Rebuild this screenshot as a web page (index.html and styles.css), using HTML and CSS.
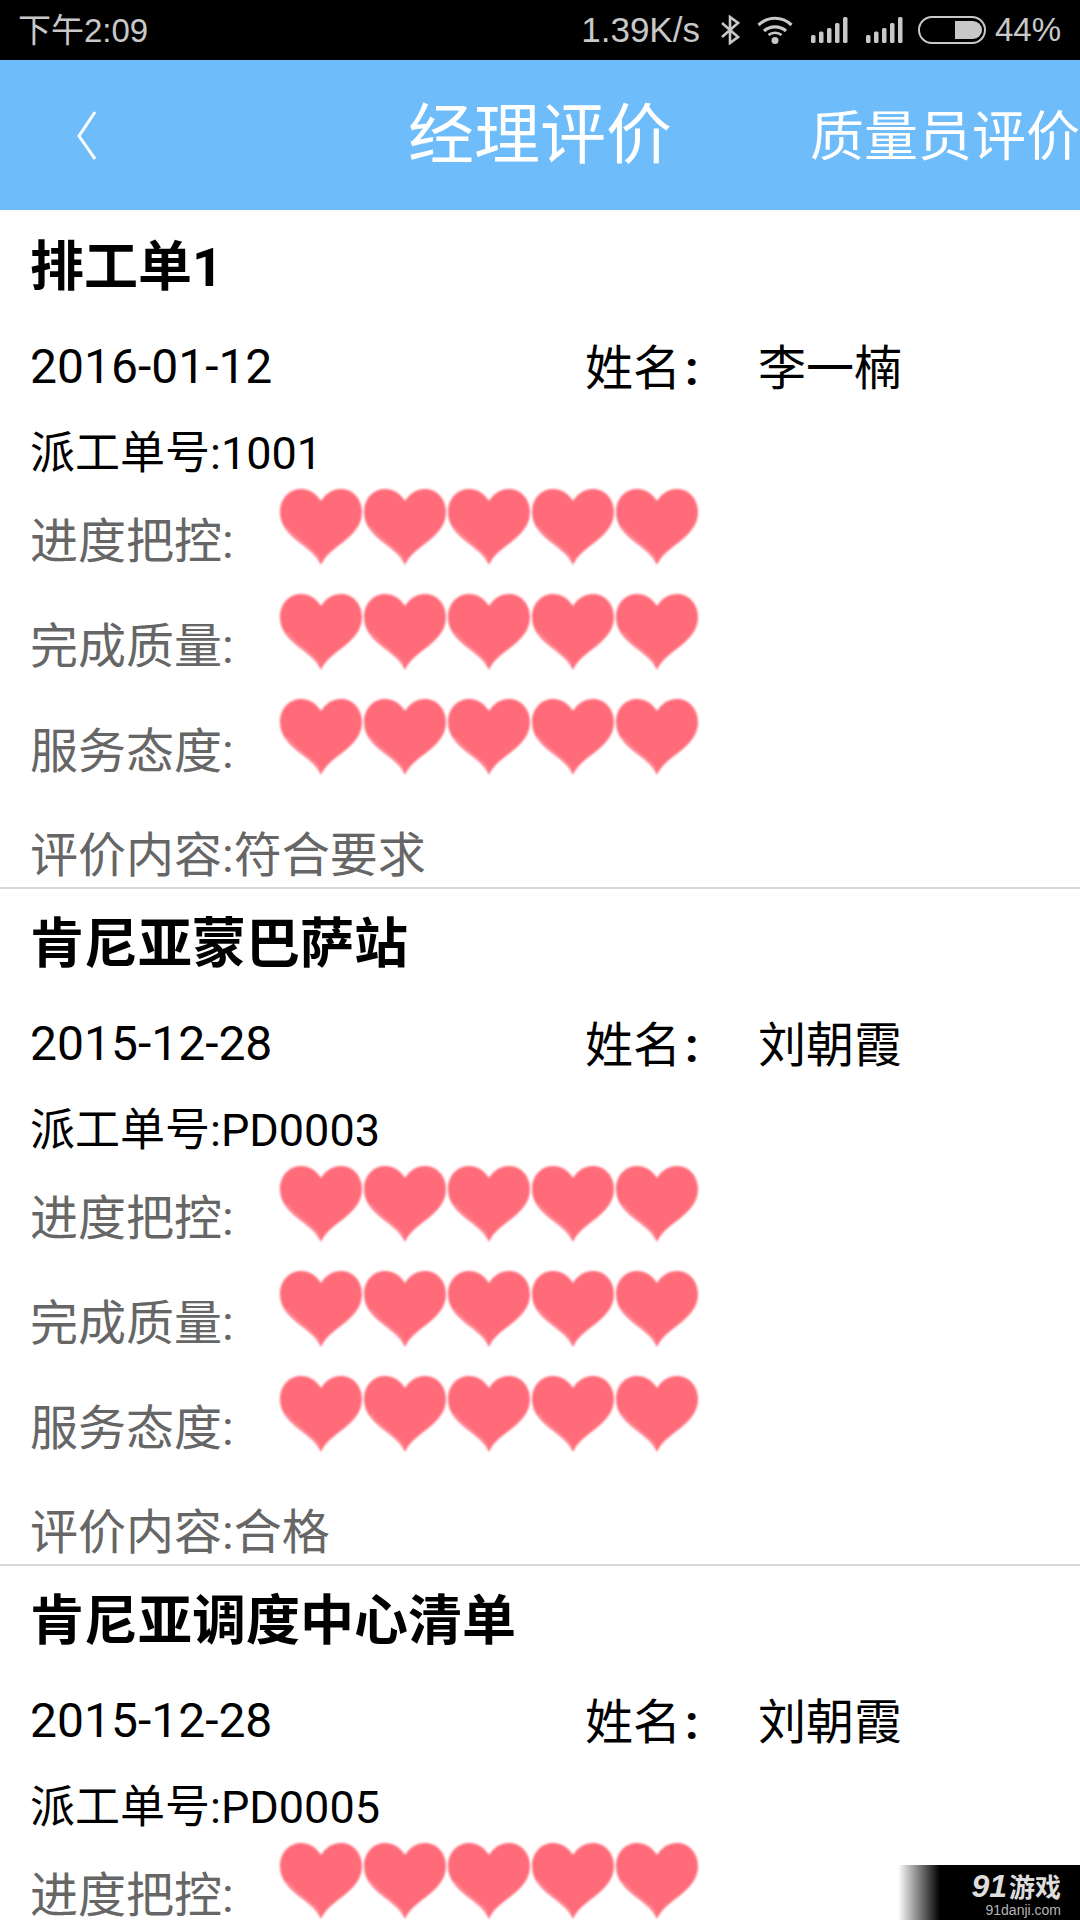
FILE: index.html
```html
<!DOCTYPE html>
<html lang="zh">
<head>
<meta charset="utf-8">
<title>经理评价</title>
<link rel="stylesheet" href="styles.css">
</head>
<body>
<svg class="defs" width="0" height="0" aria-hidden="true">
  <defs>
    <symbol id="heart" viewBox="0 0 82 76">
      <path fill="#ff6b79" d="M41 12C36 4 29 0 21 0C9 0 0 10 0 23C0 34 6 42 14 49C24 58 36 64 41 76C46 64 58 58 68 49C76 42 82 34 82 23C82 10 73 0 61 0C53 0 46 4 41 12Z"/>
      <path fill="none" stroke="#ff8794" stroke-width="2" d="M7 38C14 50 32 58 40 70"/>
    </symbol>
  </defs>
</svg>
<div class="screen">
  <header class="status">
    <span class="time">下午2:09</span>
    <div class="status-right">
      <span class="speed">1.39K/s</span>
      <svg class="bt" width="20" height="30" viewBox="0 0 20 30"><path d="M2 8L18 22L10 28V2L18 8L2 22" fill="none" stroke="#c8c8c8" stroke-width="2.6"/></svg>
      <svg class="wifi" width="36" height="28" viewBox="0 0 36 28"><g fill="none" stroke="#c8c8c8" stroke-width="3.2"><path d="M1.5 9C11 0 25 0 34.5 9"/><path d="M7 15C13 9.5 23 9.5 29 15"/></g><path d="M11.5 19C15 16 21 16 24.5 19" fill="none" stroke="#c8c8c8" stroke-width="2.5"/><circle cx="18" cy="24.5" r="3.5" fill="#c8c8c8"/></svg>
      <svg class="sig" width="37" height="26" viewBox="0 0 37 26"><g fill="#c8c8c8"><rect x="0" y="18" width="4.5" height="8" rx="1.5"/><rect x="8" y="14.5" width="4.5" height="11.5" rx="1.5"/><rect x="16" y="11" width="4.5" height="15" rx="1.5"/><rect x="24" y="6" width="4.5" height="20" rx="1.5"/><rect x="32" y="0" width="4.5" height="26" rx="1.5"/></g></svg>
      <svg class="sig" width="37" height="26" viewBox="0 0 37 26"><g fill="#c8c8c8"><rect x="0" y="18" width="4.5" height="8" rx="1.5"/><rect x="8" y="14.5" width="4.5" height="11.5" rx="1.5"/><rect x="16" y="11" width="4.5" height="15" rx="1.5"/><rect x="24" y="6" width="4.5" height="20" rx="1.5"/><rect x="32" y="0" width="4.5" height="26" rx="1.5"/></g></svg>
      <svg class="batt" width="68" height="28" viewBox="0 0 68 28"><rect x="1" y="1" width="66" height="26" rx="13" fill="none" stroke="#c8c8c8" stroke-width="2"/><path d="M37 5H55A9 9 0 0 1 55 23H37Z" fill="#c8c8c8"/></svg>
      <span class="pct">44%</span>
    </div>
  </header>
  <nav class="appbar">
    <svg class="back" width="20" height="50" viewBox="0 0 20 50"><path d="M19 2L3 26L19 49" fill="none" stroke="#fff" stroke-width="3"/></svg>
    <h1 class="title">经理评价</h1>
    <span class="action">质量员评价</span>
  </nav>
  <main class="list">
    <article class="card">
      <h2 class="name">排工单1</h2>
      <div class="meta"><span class="date">2016-01-12</span><span class="person"><span class="label">姓名<span class="colon">:</span></span><span>李一楠</span></span></div>
      <div class="order">派工单号:1001</div>
      <div class="score"><span class="score-label">进度把控:</span><div class="hearts"><svg class="heart"><use href="#heart"/></svg><svg class="heart"><use href="#heart"/></svg><svg class="heart"><use href="#heart"/></svg><svg class="heart"><use href="#heart"/></svg><svg class="heart"><use href="#heart"/></svg></div></div>
      <div class="score"><span class="score-label">完成质量:</span><div class="hearts"><svg class="heart"><use href="#heart"/></svg><svg class="heart"><use href="#heart"/></svg><svg class="heart"><use href="#heart"/></svg><svg class="heart"><use href="#heart"/></svg><svg class="heart"><use href="#heart"/></svg></div></div>
      <div class="score"><span class="score-label">服务态度:</span><div class="hearts"><svg class="heart"><use href="#heart"/></svg><svg class="heart"><use href="#heart"/></svg><svg class="heart"><use href="#heart"/></svg><svg class="heart"><use href="#heart"/></svg><svg class="heart"><use href="#heart"/></svg></div></div>
      <div class="comment">评价内容:符合要求</div>
    </article>
    <article class="card">
      <h2 class="name">肯尼亚蒙巴萨站</h2>
      <div class="meta"><span class="date">2015-12-28</span><span class="person"><span class="label">姓名<span class="colon">:</span></span><span>刘朝霞</span></span></div>
      <div class="order">派工单号:PD0003</div>
      <div class="score"><span class="score-label">进度把控:</span><div class="hearts"><svg class="heart"><use href="#heart"/></svg><svg class="heart"><use href="#heart"/></svg><svg class="heart"><use href="#heart"/></svg><svg class="heart"><use href="#heart"/></svg><svg class="heart"><use href="#heart"/></svg></div></div>
      <div class="score"><span class="score-label">完成质量:</span><div class="hearts"><svg class="heart"><use href="#heart"/></svg><svg class="heart"><use href="#heart"/></svg><svg class="heart"><use href="#heart"/></svg><svg class="heart"><use href="#heart"/></svg><svg class="heart"><use href="#heart"/></svg></div></div>
      <div class="score"><span class="score-label">服务态度:</span><div class="hearts"><svg class="heart"><use href="#heart"/></svg><svg class="heart"><use href="#heart"/></svg><svg class="heart"><use href="#heart"/></svg><svg class="heart"><use href="#heart"/></svg><svg class="heart"><use href="#heart"/></svg></div></div>
      <div class="comment">评价内容:合格</div>
    </article>
    <article class="card">
      <h2 class="name">肯尼亚调度中心清单</h2>
      <div class="meta"><span class="date">2015-12-28</span><span class="person"><span class="label">姓名<span class="colon">:</span></span><span>刘朝霞</span></span></div>
      <div class="order">派工单号:PD0005</div>
      <div class="score"><span class="score-label">进度把控:</span><div class="hearts"><svg class="heart"><use href="#heart"/></svg><svg class="heart"><use href="#heart"/></svg><svg class="heart"><use href="#heart"/></svg><svg class="heart"><use href="#heart"/></svg><svg class="heart"><use href="#heart"/></svg></div></div>
    </article>
  </main>
  <aside class="watermark">
    <div class="wm-fade"></div>
    <div class="wm-box"><span class="wm-logo"><b class="wm-91">91</b>游戏</span><span class="wm-url">91danji.com</span></div>
  </aside>
</div>
</body>
</html>
```
FILE: styles.css
```css
* { box-sizing: border-box; }
html, body { margin: 0; padding: 0; background: #fff; }
.defs { position: absolute; }
.screen {
  width: 1080px; height: 1920px; overflow: hidden; position: relative;
  font-family: "Liberation Sans", "Noto Sans CJK SC", sans-serif;
  display: flex; flex-direction: column;
}
.status {
  height: 60px; flex: none; background: #000; color: #c8c8c8;
  display: flex; justify-content: space-between; align-items: center;
  font-size: 33px; padding: 0 19px 0 18px;
}
.time { margin-bottom: 5px; }
.status-right { display: flex; align-items: center; }
.speed { margin-right: 20px; font-size: 35px; }
.bt { margin-right: 17px; }
.wifi { margin-right: 18px; }
.sig { margin-right: 18px; }
.sig + .batt { margin-left: -3px; }
.batt { margin-right: 9px; }
.appbar {
  height: 150px; flex: none; background: #6ebcf9; color: #fff;
  display: flex; align-items: center; position: relative;
}
.back { margin-left: 76px; flex: none; }
.title {
  position: absolute; left: 0; right: 0; margin: 0; text-align: center;
  font-size: 66px; font-weight: 400; line-height: 158px;
}
.action { position: absolute; right: 0; font-size: 54px; white-space: nowrap; margin-bottom: 6px; }
.list { flex: 1; min-height: 0; padding-top: 2px; font-family: Roboto, "Noto Sans CJK SC", sans-serif; }
.card { height: 677px; border-bottom: 2px solid #d9d9d9; padding: 0 0 0 30px; }
.name { margin: 0; font-size: 54px; font-weight: 700; color: #000; height: 100px; line-height: 112px; }
.meta { display: flex; align-items: center; height: 108px; font-size: 48px; color: #000; }
.date { width: 555px; flex: none; }
.person { display: flex; margin-bottom: 4px; }
.label { width: 173px; flex: none; }
.colon { font-weight: 700; margin-left: 4px; }
.order { font-size: 45px; line-height: 50px; height: 52px; margin-top: 9px; color: #000; }
.score { display: flex; height: 105px; color: #666; font-size: 48px; }
.score-label { width: 249px; flex: none; padding-top: 33px; line-height: 56px; }
.hearts { display: flex; padding-top: 8px; }
.heart { width: 84px; height: 76px; flex: none; padding: 0 1px; filter: blur(0.8px); }
.comment { font-size: 48px; color: #666; line-height: 56px; margin-top: 32px; }
.watermark { position: absolute; right: 0; bottom: 0; width: 182px; height: 55px; display: flex; }
.wm-fade { width: 42px; background: linear-gradient(to right, #fff, #000); }
.wm-box { flex: 1; background: #000; display: flex; flex-direction: column; align-items: flex-end; padding: 7px 19px 0 0; color: #ddd; }
.wm-logo { font-size: 26px; font-weight: 700; line-height: 28px; white-space: nowrap; font-family: "Liberation Sans", "Noto Sans CJK SC", sans-serif; }
.wm-91 { font-style: italic; font-size: 32px; margin-right: 2px; }
.wm-url { font-size: 14px; line-height: 16px; color: #b4b4b4; }
```
